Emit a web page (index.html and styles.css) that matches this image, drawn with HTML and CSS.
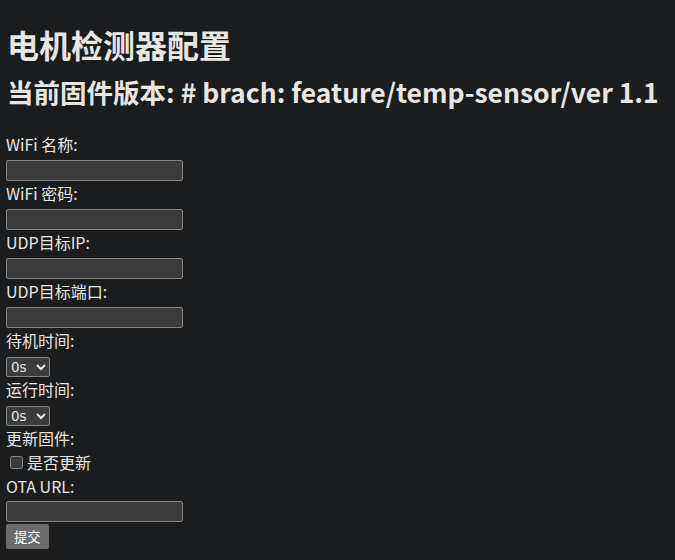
FILE: index.html
```html
<!DOCTYPE html>
<html lang="zh">
<head>
<meta charset="utf-8">
<title>电机检测器配置</title>
<link rel="stylesheet" href="styles.css">
</head>
<body>
<h1 class="title">电机检测器配置</h1>
<h2 class="version">当前固件版本: # brach: feature/temp-sensor/ver 1.1</h2>
<form class="form">
  <label class="label" for="ssid">WiFi 名称:</label>
  <input class="text" id="ssid" type="text">
  <label class="label" for="pwd">WiFi 密码:</label>
  <input class="text" id="pwd" type="password">
  <label class="label" for="ip">UDP目标IP:</label>
  <input class="text" id="ip" type="text">
  <label class="label" for="port">UDP目标端口:</label>
  <input class="text" id="port" type="text">
  <label class="label" for="idle">待机时间:</label>
  <select class="sel" id="idle"><option>0s</option></select>
  <label class="label" for="run">运行时间:</label>
  <select class="sel" id="run"><option>0s</option></select>
  <span class="label">更新固件:</span>
  <label class="check"><input class="box" type="checkbox">是否更新</label>
  <label class="label ota" for="url">OTA URL:</label>
  <input class="text url" id="url" type="text">
  <button class="submit" type="button">提交</button>
</form>
</body>
</html>
```
FILE: styles.css
```css
html { color-scheme: dark; }
body {
  margin: 0;
  padding: 0 6px;
  background: #1b1c1e;
  color: #e8e6e3;
  font-family: "Noto Sans CJK SC", "Noto Sans", sans-serif;
  font-size: 16px;
}
.title {
  margin: 21px 0 0 1px;
  font-size: 32px;
  line-height: 46px;
  font-weight: 700;
}
.version {
  margin: 8px 0 0 1px;
  font-size: 26.5px;
  line-height: 34px;
  font-weight: 700;
  white-space: nowrap;
}
.form {
  display: flex;
  flex-direction: column;
  align-items: flex-start;
  margin-top: 24px;
}
.label {
  display: block;
  box-sizing: border-box;
  line-height: 22px;
  height: 24px;
}
.text {
  box-sizing: border-box;
  width: 177px;
  height: 21px;
  margin: 3px 0 1px;
  padding: 1px 2px;
  background: #3b3b3b;
  border: 1px solid #858585;
  border-radius: 2px;
  color: #e8e6e3;
}
.sel {
  box-sizing: border-box;
  height: 20px;
  width: 44px;
  margin: 4px 0 1px;
  font-family: "DejaVu Sans", sans-serif;
  font-size: 13.5px;
  background: #3b3b3b;
  border: 1px solid #858585;
  border-radius: 2px;
  color: #e8e6e3;
}
.check {
  display: flex;
  align-items: center;
  height: 22px;
}
.box {
  width: 13px;
  height: 13px;
  margin: 0 4px 0 4px;
}
.ota { margin-top: 2px; }
.url { margin-top: 2px; }
.submit {
  margin-top: 1px;
  height: 25px;
  padding: 0 8px;
  font-family: "Noto Sans CJK SC", sans-serif;
  font-size: 13.33px;
  background: #6b6b6b;
  color: #ffffff;
  border: none;
  border-radius: 2px;
}
```
